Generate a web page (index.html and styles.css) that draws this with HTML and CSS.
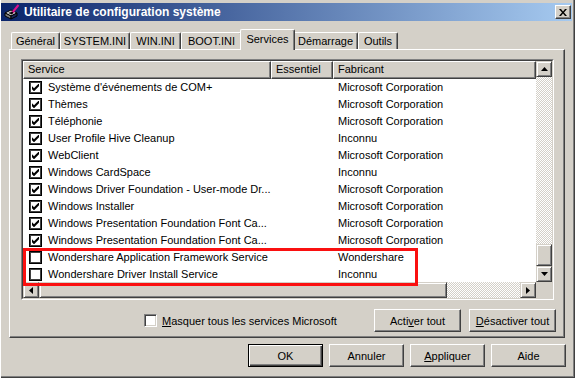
FILE: index.html
```html
<!DOCTYPE html>
<html>

<head>
    <meta charset="UTF-8">
    <title>Utilitaire de configuration système</title>
    <link rel="stylesheet" href="styles.css">
</head>

<body>
    <div class="window">
        <div class="titlebar">
            <svg class="app-icon" width="16" height="16" viewBox="0 0 16 16">
                <path d="M1 9 L7 6 L13 9 L7 12 Z" fill="#e8e8e8" stroke="#000" stroke-width="1" />
                <path d="M1 9 L7 12 L7 15 L1 12 Z" fill="#808080" stroke="#000" stroke-width="1" />
                <path d="M7 12 L13 9 L13 12 L7 15 Z" fill="#1c2a5a" stroke="#000" stroke-width="1" />
                <path d="M4 9 L7 7.5 L10 9 L7 10.5 Z" fill="#404040" />
                <path d="M8 9 L14.5 1" stroke="#e0108c" stroke-width="2" />
                <path d="M7 10 L8.6 8" stroke="#000" stroke-width="2" />
            </svg>
            <span class="title">Utilitaire de configuration système</span>
            <button class="close">
                <svg width="8" height="7" viewBox="0 0 8 7">
                    <path d="M0 0h2l2 2.4L6 0h2L5 3.5 8 7H6L4 4.6 2 7H0l3-3.5z" fill="#000" />
                </svg>
            </button>
        </div>

        <div class="tabs">
            <div class="tab">Général</div>
            <div class="tab">SYSTEM.INI</div>
            <div class="tab">WIN.INI</div>
            <div class="tab">BOOT.INI</div>
            <div class="tab active">Services</div>
            <div class="tab">Démarrage</div>
            <div class="tab">Outils</div>
        </div>

        <div class="panel">
            <div class="listview">
                <div class="lv-inner">
                    <div class="lv-body">
                        <div class="lv-header">
                            <div class="hcell">Service</div>
                            <div class="hcell">Essentiel</div>
                            <div class="hcell">Fabricant</div>
                        </div>

                        <div class="lv-row">
                            <div class="c-service"><span class="chk"><svg width="7" height="7" viewBox="0 0 7 7"><path d="M0 2.3 2 4.3 7 -0.7V2.3L2 7.3 0 5.3z" fill="#000" /></svg></span>Système d'événements de COM+</div>
                            <div></div>
                            <div class="c-maker">Microsoft Corporation</div>
                        </div>
                        <div class="lv-row">
                            <div class="c-service"><span class="chk"><svg width="7" height="7" viewBox="0 0 7 7"><path d="M0 2.3 2 4.3 7 -0.7V2.3L2 7.3 0 5.3z" fill="#000" /></svg></span>Thèmes</div>
                            <div></div>
                            <div class="c-maker">Microsoft Corporation</div>
                        </div>
                        <div class="lv-row">
                            <div class="c-service"><span class="chk"><svg width="7" height="7" viewBox="0 0 7 7"><path d="M0 2.3 2 4.3 7 -0.7V2.3L2 7.3 0 5.3z" fill="#000" /></svg></span>Téléphonie</div>
                            <div></div>
                            <div class="c-maker">Microsoft Corporation</div>
                        </div>
                        <div class="lv-row">
                            <div class="c-service"><span class="chk"><svg width="7" height="7" viewBox="0 0 7 7"><path d="M0 2.3 2 4.3 7 -0.7V2.3L2 7.3 0 5.3z" fill="#000" /></svg></span>User Profile Hive Cleanup</div>
                            <div></div>
                            <div class="c-maker">Inconnu</div>
                        </div>
                        <div class="lv-row">
                            <div class="c-service"><span class="chk"><svg width="7" height="7" viewBox="0 0 7 7"><path d="M0 2.3 2 4.3 7 -0.7V2.3L2 7.3 0 5.3z" fill="#000" /></svg></span>WebClient</div>
                            <div></div>
                            <div class="c-maker">Microsoft Corporation</div>
                        </div>
                        <div class="lv-row">
                            <div class="c-service"><span class="chk"><svg width="7" height="7" viewBox="0 0 7 7"><path d="M0 2.3 2 4.3 7 -0.7V2.3L2 7.3 0 5.3z" fill="#000" /></svg></span>Windows CardSpace</div>
                            <div></div>
                            <div class="c-maker">Inconnu</div>
                        </div>
                        <div class="lv-row">
                            <div class="c-service"><span class="chk"><svg width="7" height="7" viewBox="0 0 7 7"><path d="M0 2.3 2 4.3 7 -0.7V2.3L2 7.3 0 5.3z" fill="#000" /></svg></span>Windows Driver Foundation - User-mode Dr...</div>
                            <div></div>
                            <div class="c-maker">Microsoft Corporation</div>
                        </div>
                        <div class="lv-row">
                            <div class="c-service"><span class="chk"><svg width="7" height="7" viewBox="0 0 7 7"><path d="M0 2.3 2 4.3 7 -0.7V2.3L2 7.3 0 5.3z" fill="#000" /></svg></span>Windows Installer</div>
                            <div></div>
                            <div class="c-maker">Microsoft Corporation</div>
                        </div>
                        <div class="lv-row">
                            <div class="c-service"><span class="chk"><svg width="7" height="7" viewBox="0 0 7 7"><path d="M0 2.3 2 4.3 7 -0.7V2.3L2 7.3 0 5.3z" fill="#000" /></svg></span>Windows Presentation Foundation Font Ca...</div>
                            <div></div>
                            <div class="c-maker">Microsoft Corporation</div>
                        </div>
                        <div class="lv-row">
                            <div class="c-service"><span class="chk"><svg width="7" height="7" viewBox="0 0 7 7"><path d="M0 2.3 2 4.3 7 -0.7V2.3L2 7.3 0 5.3z" fill="#000" /></svg></span>Windows Presentation Foundation Font Ca...</div>
                            <div></div>
                            <div class="c-maker">Microsoft Corporation</div>
                        </div>
                        <div class="lv-row">
                            <div class="c-service"><span class="chk"></span>Wondershare Application Framework Service</div>
                            <div></div>
                            <div class="c-maker">Wondershare</div>
                        </div>
                        <div class="lv-row">
                            <div class="c-service"><span class="chk"></span>Wondershare Driver Install Service</div>
                            <div></div>
                            <div class="c-maker">Inconnu</div>
                        </div>
                    </div>

                    <div class="vscroll">
                        <div class="sb-btn"><svg width="7" height="4" viewBox="0 0 7 4"><path d="M3.5 0 7 4H0z" fill="#000" /></svg></div>
                        <div class="sb-track"></div>
                        <div class="sb-thumb v"></div>
                        <div class="sb-btn"><svg width="7" height="4" viewBox="0 0 7 4"><path d="M0 0h7L3.5 4z" fill="#000" /></svg></div>
                    </div>
                    <div class="hscroll">
                        <div class="sb-btn"><svg width="4" height="7" viewBox="0 0 4 7"><path d="M4 0v7L0 3.5z" fill="#000" /></svg></div>
                        <div class="sb-thumb h"></div>
                        <div class="sb-track"></div>
                        <div class="sb-btn"><svg width="4" height="7" viewBox="0 0 4 7"><path d="M0 0v7L4 3.5z" fill="#000" /></svg></div>
                    </div>
                    <div class="corner"></div>
                </div>
            </div>

            <div class="options">
                <label class="opt-check"><span class="box"></span><span><u>M</u>asquer tous les services Microsoft</span></label>
                <div class="opt-buttons">
                    <button class="btn wide">Acti<u>v</u>er tout</button>
                    <button class="btn wide"><u>D</u>ésactiver tout</button>
                </div>
            </div>
        </div>

        <div class="actions">
            <button class="btn default">OK</button>
            <button class="btn">Annuler</button>
            <button class="btn"><u>A</u>ppliquer</button>
            <button class="btn">Aide</button>
        </div>

        <div class="highlight"></div>
    </div>
</body>

</html>
```

FILE: styles.css
```css
body {
    margin: 0;
    font-family: "Liberation Sans", Arial, sans-serif;
    font-size: 11px;
    color: #000;
}

.window {
    position: relative;
    width: 575px;
    height: 378px;
    box-sizing: border-box;
    padding: 3px 3px 2px 1px;
    background: #d4d0c8;
    box-shadow: inset 1px 0 #fff, inset -1px -1px #404040, inset -2px -2px #808080;
}

/* title bar */
.titlebar {
    display: flex;
    align-items: center;
    height: 18px;
    padding: 0 1px 0 3px;
    background: linear-gradient(90deg, #0a246a, #a6caf0);
    color: #fff;
    font-weight: bold;
    font-size: 12px;
}

.app-icon {
    margin-right: 4px;
}

.title {
    flex: 1;
}

.close {
    width: 16px;
    height: 14px;
    padding: 0;
    display: flex;
    align-items: center;
    justify-content: center;
    background: #d4d0c8;
    border: 1px solid;
    border-color: #fff #404040 #404040 #fff;
    box-shadow: inset -1px -1px #808080;
}

/* tabs */
.tabs {
    display: flex;
    align-items: flex-end;
    height: 28px;
    padding-left: 10px;
}

.tab {
    height: 17px;
    box-sizing: border-box;
    border-top: 1px solid #fff;
    border-left: 1px solid #fff;
    border-right: 1px solid #404040;
    box-shadow: inset -1px 0 #808080;
    border-radius: 2px 2px 0 0;
    text-align: center;
    line-height: 16px;
    white-space: nowrap;
}

.tab:nth-child(1) { width: 49px; }
.tab:nth-child(2) { width: 70px; }
.tab:nth-child(3) { width: 51px; }
.tab:nth-child(4) { width: 61px; }
.tab:nth-child(5) { width: 55px; }
.tab:nth-child(6) { width: 65px; }
.tab:nth-child(7) { width: 40px; }

.tab.active {
    position: relative;
    z-index: 2;
    height: 21px;
    margin: 0 -2px -1px;
    line-height: 18px;
    background: #d4d0c8;
}

/* tab page */
.panel {
    margin: 0 7px 0 8px;
    border: 1px solid;
    border-color: #fff #404040 #404040 #fff;
    box-shadow: inset -1px -1px #808080;
    padding: 9px 10px 5px 11px;
}

.listview {
    border: 1px solid;
    border-color: #808080 #fff #fff #808080;
}

.lv-inner {
    display: grid;
    grid-template-columns: 1fr 16px;
    grid-template-rows: 221px 16px;
    border: 1px solid;
    border-color: #404040 #d4d0c8 #d4d0c8 #404040;
    background: #fff;
}

.lv-body {
    overflow: hidden;
}

.lv-header,
.lv-row {
    display: grid;
    grid-template-columns: 248px 62px 1fr;
    height: 17px;
}

.lv-header {
    height: 18px;
}

.hcell {
    box-sizing: border-box;
    background: #d4d0c8;
    border-top: 1px solid #fff;
    border-left: 1px solid #fff;
    border-right: 1px solid #404040;
    border-bottom: 1px solid #404040;
    box-shadow: inset -1px -1px #808080;
    padding-left: 4px;
    line-height: 15px;
}

.lv-row {
    line-height: 17px;
    white-space: nowrap;
}

.c-service {
    display: flex;
    align-items: center;
    padding-left: 6px;
    overflow: hidden;
}

.c-maker {
    padding-left: 5px;
}

.chk {
    width: 13px;
    height: 13px;
    box-sizing: border-box;
    margin-right: 6px;
    flex: none;
    display: flex;
    align-items: center;
    justify-content: center;
    border: 1px solid #000;
    box-shadow: inset 0 0 0 1px #404040;
    background: #fff;
}

/* scrollbars */
.vscroll {
    display: flex;
    flex-direction: column;
}

.hscroll {
    display: flex;
}

.sb-btn,
.sb-thumb {
    box-sizing: border-box;
    background: #d4d0c8;
    border: 1px solid;
    border-color: #d4d0c8 #404040 #404040 #d4d0c8;
    box-shadow: inset 1px 1px #fff, inset -1px -1px #808080;
}

.sb-btn {
    width: 16px;
    height: 16px;
    flex: none;
    display: flex;
    align-items: center;
    justify-content: center;
}

.sb-thumb.v {
    height: 22px;
    flex: none;
}

.sb-thumb.h {
    width: 408px;
    flex: none;
}

.sb-track {
    flex: 1;
    background-image: repeating-conic-gradient(#fff 0 25%, #d4d0c8 0 50%);
    background-size: 2px 2px;
}

.corner {
    background: #d4d0c8;
}

/* options row */
.options {
    display: flex;
    align-items: center;
    height: 23px;
    margin-top: 9px;
}

.opt-check {
    display: flex;
    align-items: center;
    margin-left: 123px;
}

.box {
    width: 13px;
    height: 13px;
    box-sizing: border-box;
    margin-right: 5px;
    background: #fff;
    border: 1px solid;
    border-color: #808080 #fff #fff #808080;
    box-shadow: inset 1px 1px #404040, inset -1px -1px #d4d0c8;
}

.opt-buttons {
    display: flex;
    gap: 8px;
    margin-left: auto;
    margin-right: -2px;
}

/* buttons */
.btn {
    width: 75px;
    height: 23px;
    padding: 0;
    font: inherit;
    color: #000;
    background: #d4d0c8;
    border: 1px solid;
    border-color: #fff #404040 #404040 #fff;
    box-shadow: inset -1px -1px #808080;
}

.btn.wide {
    width: 87px;
}

.btn.default {
    border-color: #000;
    box-shadow: inset 1px 1px #fff, inset -1px -1px #404040, inset -2px -2px #808080;
}

.actions {
    display: flex;
    justify-content: flex-end;
    gap: 6px;
    margin-top: 6px;
    padding-right: 6px;
}

/* red marker drawn over the list */
.highlight {
    position: absolute;
    left: 23px;
    top: 248px;
    width: 395px;
    height: 38px;
    box-sizing: border-box;
    border: 3px solid #fa1010;
}
```
